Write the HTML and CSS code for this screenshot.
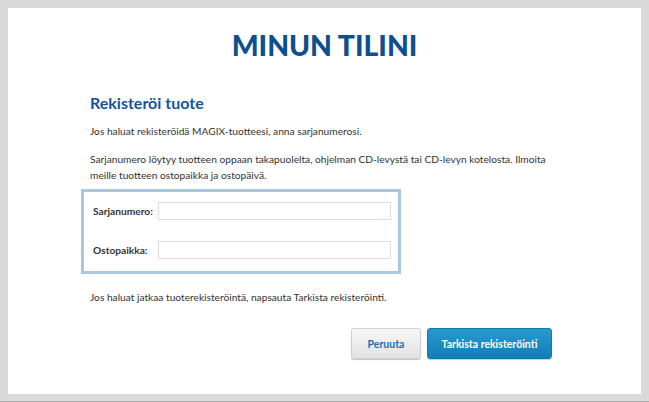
FILE: index.html
```html
<!DOCTYPE html>
<html lang="fi">
<head>
<meta charset="utf-8">
<title>Minun tilini</title>
<link rel="stylesheet" href="styles.css">
</head>
<body>
<div class="page">
  <h1 class="title">MINUN TILINI</h1>
  <div class="content">
    <h2 class="section-title">Rekisteröi tuote</h2>
    <p class="text first">Jos haluat rekisteröidä MAGIX-tuotteesi, anna sarjanumerosi.</p>
    <p class="text">Sarjanumero löytyy tuotteen oppaan takapuolelta, ohjelman CD-levystä tai CD-levyn kotelosta. Ilmoita meille tuotteen ostopaikka ja ostopäivä.</p>
    <div class="form-box">
      <div class="form-row">
        <label class="label" for="serial">Sarjanumero:</label>
        <input class="field" id="serial" type="text">
      </div>
      <div class="form-row">
        <label class="label" for="place">Ostopaikka:</label>
        <input class="field" id="place" type="text">
      </div>
    </div>
    <p class="text note">Jos haluat jatkaa tuoterekisteröintä, napsauta Tarkista rekisteröinti.</p>
    <div class="actions">
      <button class="btn btn-secondary" type="button">Peruuta</button>
      <button class="btn btn-primary" type="button">Tarkista rekisteröinti</button>
    </div>
  </div>
</div>
</body>
</html>
```
FILE: styles.css
```css
html, body {
  margin: 0;
  padding: 0;
}
body {
  background: #d9d9d9;
  padding: 8px 8px 7px 8px;
  border-bottom: 1px solid #ababab;
  font-family: Lato, "Liberation Sans", Arial, sans-serif;
  color: #333333;
}
.page {
  background: #ffffff;
  height: 386px;
  box-sizing: border-box;
  padding-top: 22px;
}
.title {
  margin: 0;
  text-align: center;
  font-size: 28.3px;
  line-height: 30px;
  font-weight: 900;
  color: #0e4f8e;
}
.content {
  width: 469px;
  margin: 0 auto;
  padding-top: 33px;
}
.section-title {
  margin: 0;
  font-size: 16px;
  line-height: 20px;
  font-weight: 700;
  color: #14549a;
}
.text {
  margin: 0;
  font-size: 10.2px;
  line-height: 16px;
  color: #333333;
}
.text.first {
  margin-top: 10px;
  margin-bottom: 12px;
}
.form-box {
  margin: 6px 0 0 -9px;
  width: 320px;
  height: 85px;
  box-sizing: border-box;
  border: 3px solid #a9c7df;
  padding: 10px 0 0 9px;
  display: flex;
  flex-direction: column;
  gap: 21px;
}
.form-row {
  display: flex;
  align-items: center;
}
.label {
  width: 65px;
  font-size: 10.2px;
  font-weight: 700;
  color: #333333;
}
.field {
  width: 233px;
  height: 18px;
  box-sizing: border-box;
  margin: 0;
  border: 1px solid #dddddd;
  background: #ffffff;
  padding: 0 4px;
}
.note {
  margin-top: 15px;
}
.actions {
  display: flex;
  justify-content: flex-end;
  gap: 6px;
  padding-right: 7px;
  margin-top: 23px;
}
.btn {
  height: 31px;
  border-radius: 3px;
  font-family: Lato, "Liberation Sans", Arial, sans-serif;
  font-size: 10.5px;
  font-weight: 700;
  cursor: pointer;
  padding: 0;
}
.btn-secondary {
  width: 70px;
  color: #1f6fae;
  border: 1px solid #d0d0d0;
  background: linear-gradient(#f7f7f7, #e2e2e2);
  box-shadow: 0 1px 1px rgba(0,0,0,0.25);
}
.btn-primary {
  width: 125px;
  color: #ffffff;
  border: 1px solid #1479ad;
  background: linear-gradient(#2899ce, #117fb7);
  box-shadow: 0 1px 1px rgba(0,0,0,0.2);
}
```
